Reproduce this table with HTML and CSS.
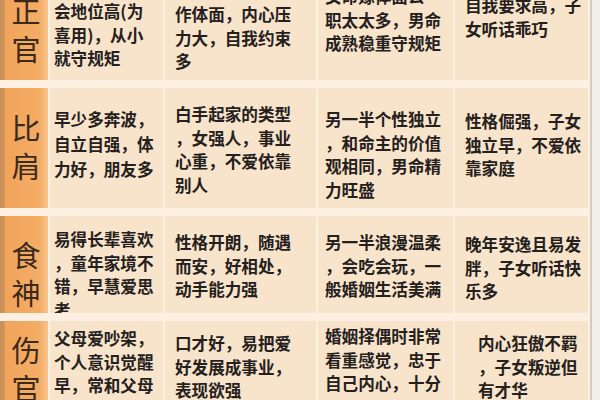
FILE: index.html
```html
<!DOCTYPE html>
<html lang="zh">
<head>
<meta charset="utf-8">
<title>十神</title>
<link rel="stylesheet" href="styles.css">
</head>
<body>
<div class="sheet">
  <div class="grid">
    <!-- 正官 -->
    <div class="lab r0"><span>正</span><span>官</span></div>
    <div class="c c1 r0">会地位高(为<br>喜用)，从小<br>就守规矩</div>
    <div class="c c2 r0">作体面，内心压<br>力大，自我约束<br>多</div>
    <div class="c c3 r0">女命嫁体面公<br>职太太多，男命<br>成熟稳重守规矩</div>
    <div class="c c4 r0">自我要求高，子<br>女听话乖巧</div>

    <!-- 比肩 -->
    <div class="lab r1"><span>比</span><span>肩</span></div>
    <div class="c c1 r1">早少多奔波，<br>自立自强，体<br>力好，朋友多</div>
    <div class="c c2 r1">白手起家的类型<br>，女强人，事业<br>心重，不爱依靠<br>别人</div>
    <div class="c c3 r1">另一半个性独立<br>，和命主的价值<br>观相同，男命精<br>力旺盛</div>
    <div class="c c4 r1">性格倔强，子女<br>独立早，不爱依<br>靠家庭</div>

    <!-- 食神 -->
    <div class="lab r2"><span>食</span><span>神</span></div>
    <div class="c c1 r2">易得长辈喜欢<br>，童年家境不<br>错，早慧爱思<br>考</div>
    <div class="c c2 r2">性格开朗，随遇<br>而安，好相处，<br>动手能力强</div>
    <div class="c c3 r2">另一半浪漫温柔<br>，会吃会玩，一<br>般婚姻生活美满</div>
    <div class="c c4 r2">晚年安逸且易发<br>胖，子女听话快<br>乐多</div>

    <!-- 伤官 -->
    <div class="lab r3"><span>伤</span><span>官</span></div>
    <div class="c c1 r3">父母爱吵架，<br>个人意识觉醒<br>早，常和父母</div>
    <div class="c c2 r3">口才好，易把爱<br>好发展成事业，<br>表现欲强</div>
    <div class="c c3 r3">婚姻择偶时非常<br>看重感觉，忠于<br>自己内心，十分</div>
    <div class="c c4 r3">内心狂傲不羁<br>，子女叛逆但<br>有才华</div>
  </div>
</div>
</body>
</html>
```

FILE: styles.css
```css
html, body {
  margin: 0;
  padding: 0;
}

body {
  width: 600px;
  height: 400px;
  overflow: hidden;
  background: #f7e2c6;
  font-family: "Noto Sans CJK SC", "Noto Sans", sans-serif;
}

.sheet {
  width: 600px;
  height: 400px;
  overflow: hidden;
  background: #f1ede8;
}

.grid {
  display: grid;
  grid-template-columns: 48px 113px 151px 135px 133px;
  grid-template-rows: 120px 120px 97px 110px;
  column-gap: 2px;
  row-gap: 8px;
  margin-top: -40px;
  width: 590px;
  background: #fbf0e2;
  border-right: 2px solid #d6cbbf;
}

.c {
  background: #f8e4ca;
  color: #24201d;
  font-size: 16.6px;
  font-weight: 700;
  line-height: 23.5px;
  white-space: nowrap;
  overflow: hidden;
}

.c1 { padding-left: 4px; }
.c2 { padding-left: 10px; }
.c3 { padding-left: 7px; }
.c4 { padding-left: 10px; }

.lab {
  background: linear-gradient(90deg, #c9905a 0, #c9905a 4px, #f1a45a 5px, #f4ad66 40px, #f7c48d 48px);
  color: #3b2a1c;
  font-size: 29px;
  line-height: 38px;
  display: flex;
  flex-direction: column;
  align-items: center;
  padding-left: 4px;
  overflow: hidden;
}

.lab span { display: block; }

/* row 正官 */
.lab.r0 { padding-top: 31px; }
.c1.r0 { padding-top: 40px; }
.c2.r0 { padding-top: 43px; }
.c3.r0 { padding-top: 25px; }
.c4.r0 { padding-top: 34px; }

/* row 比肩 */
.lab.r1 { padding-top: 20px; }
.c1.r1 { padding-top: 19px; line-height: 25px; }
.c2.r1 { padding-top: 15px; }
.c3.r1 { padding-top: 20px; }
.c4.r1 { padding-top: 22px; }

/* row 食神 */
.lab.r2 { padding-top: 19px; }
.c1.r2 { padding-top: 12px; }
.c2.r2 { padding-top: 15px; }
.c3.r2 { padding-top: 15px; }
.c4.r2 { padding-top: 17px; }

/* row 伤官 */
.lab.r3 { padding-top: 9px; }
.c1.r3 { padding-top: 6px; }
.c2.r3 { padding-top: 11px; }
.c3.r3 { padding-top: 4px; }
.c4.r3 { padding-top: 11px; padding-left: 23px; }
```
